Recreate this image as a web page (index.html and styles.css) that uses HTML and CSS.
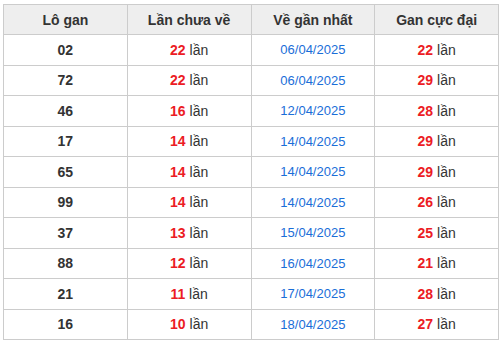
FILE: index.html
```html
<!DOCTYPE html>
<html>
  <head>
    <meta charset="utf-8">
    <link rel="stylesheet" href="styles.css">
  </head>
  <body>
    <table class="gan">
      <thead>
        <tr>
          <th>Lô gan</th>
          <th>Lần chưa về</th>
          <th>Về gần nhất</th>
          <th>Gan cực đại</th>
        </tr>
      </thead>
      <tbody>
        <tr><td class="num">02</td><td><b>22</b> lần</td><td class="date">06/04/2025</td><td><b>22</b> lần</td></tr>
        <tr><td class="num">72</td><td><b>22</b> lần</td><td class="date">06/04/2025</td><td><b>29</b> lần</td></tr>
        <tr><td class="num">46</td><td><b>16</b> lần</td><td class="date">12/04/2025</td><td><b>28</b> lần</td></tr>
        <tr><td class="num">17</td><td><b>14</b> lần</td><td class="date">14/04/2025</td><td><b>29</b> lần</td></tr>
        <tr><td class="num">65</td><td><b>14</b> lần</td><td class="date">14/04/2025</td><td><b>29</b> lần</td></tr>
        <tr><td class="num">99</td><td><b>14</b> lần</td><td class="date">14/04/2025</td><td><b>26</b> lần</td></tr>
        <tr><td class="num">37</td><td><b>13</b> lần</td><td class="date">15/04/2025</td><td><b>25</b> lần</td></tr>
        <tr><td class="num">88</td><td><b>12</b> lần</td><td class="date">16/04/2025</td><td><b>21</b> lần</td></tr>
        <tr><td class="num">21</td><td><b>11</b> lần</td><td class="date">17/04/2025</td><td><b>28</b> lần</td></tr>
        <tr><td class="num">16</td><td><b>10</b> lần</td><td class="date">18/04/2025</td><td><b>27</b> lần</td></tr>
      </tbody>
    </table>
  </body>
</html>
```

FILE: styles.css
```css
html {
  background: white;
  color: #333;
  font-family: "Liberation Sans", Arial, sans-serif;
  font-size: 13px;
}
body {
  margin: 4px 4px 0 3px;
}
table.gan {
  width: 496px;
  border-collapse: collapse;
  table-layout: fixed;
}
.gan th,
.gan td {
  border: 1px solid #ccc;
  text-align: center;
  padding: 0;
}
.gan th {
  height: 29px;
  background: #eee;
  font-size: 14px;
  font-weight: bold;
}
.gan td {
  height: 29.5px;
  font-size: 14px;
}
.gan td.num {
  font-weight: bold;
}
.gan td b {
  color: #ec1c24;
}
.gan td.date {
  color: #1a6ed8;
  font-size: 13px;
}
```
